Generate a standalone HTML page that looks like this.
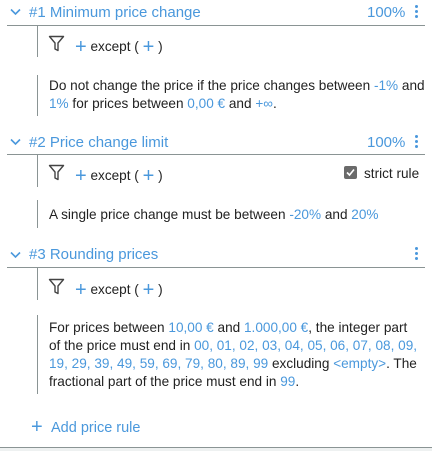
<!DOCTYPE html>
<html><head><style>
*{margin:0;padding:0;box-sizing:border-box}
body{width:432px;height:451px;background:#fff;font-family:"Liberation Sans",sans-serif;color:#222;position:relative;overflow:hidden}
.a{position:absolute;white-space:nowrap}
.b{color:#4a98dc}
.h{font-size:15px;color:#4a98dc}
.hl{position:absolute;left:7px;width:418px;height:1px;background:#8a9494}
.vl{position:absolute;left:37px;width:1px;background:#8a9494}
.t{font-size:13.6px;line-height:18px}
.dots{position:absolute;width:3px}
.dots i{display:block;width:3px;height:3px;border-radius:50%;background:#4a98dc;margin-bottom:2px}
</style></head><body>

<!-- rule 1 -->
<svg class="a" style="left:10px;top:8px" width="11" height="8"><path d="M1 1.5L5.5 6L10 1.5" fill="none" stroke="#4a98dc" stroke-width="1.6"/></svg>
<div class="a h" style="left:29px;top:4px">#1 Minimum price change</div>
<div class="a h" style="left:367px;top:4px">100%</div>
<div class="dots" style="left:415px;top:5px"><i></i><i></i><i></i></div>
<div class="hl" style="top:25px"></div>
<div class="vl" style="top:26px;height:31px"></div>
<svg class="a" style="left:48px;top:35px" width="17" height="17"><path d="M1.5 1.5H15.5L10 8V15.5L7 14V8Z" fill="none" stroke="#444" stroke-width="1.4" stroke-linejoin="round"/></svg>
<div class="a t" style="left:75px;top:36px"><span class="b" style="font-size:20px;position:relative;top:2px">+</span> except ( <span class="b" style="font-size:20px;position:relative;top:2px">+</span> )</div>
<div class="vl" style="top:75px;height:41px"></div>
<div class="a t" style="left:49px;top:77px">Do not change the price if the price changes between <span class="b">-1%</span> and<br><span class="b">1%</span> for prices between <span class="b">0,00 €</span> and <span class="b">+∞</span>.</div>

<!-- rule 2 -->
<svg class="a" style="left:10px;top:138px" width="11" height="8"><path d="M1 1.5L5.5 6L10 1.5" fill="none" stroke="#4a98dc" stroke-width="1.6"/></svg>
<div class="a h" style="left:29px;top:134px">#2 Price change limit</div>
<div class="a h" style="left:367px;top:134px">100%</div>
<div class="dots" style="left:415px;top:135px"><i></i><i></i><i></i></div>
<div class="hl" style="top:154px"></div>
<div class="vl" style="top:155px;height:32px"></div>
<svg class="a" style="left:48px;top:164px" width="17" height="17"><path d="M1.5 1.5H15.5L10 8V15.5L7 14V8Z" fill="none" stroke="#444" stroke-width="1.4" stroke-linejoin="round"/></svg>
<div class="a t" style="left:75px;top:165px"><span class="b" style="font-size:20px;position:relative;top:2px">+</span> except ( <span class="b" style="font-size:20px;position:relative;top:2px">+</span> )</div>
<div class="a" style="left:344px;top:166px;width:13px;height:13px;background:#6a6a6a;border-radius:2px"></div>
<svg class="a" style="left:344px;top:166px" width="13" height="13"><path d="M3 6.5L5.5 9L10 3.5" fill="none" stroke="#fff" stroke-width="1.6"/></svg>
<div class="a t" style="left:364px;top:165px">strict rule</div>
<div class="vl" style="top:200px;height:28px"></div>
<div class="a t" style="left:49px;top:206px">A single price change must be between <span class="b">-20%</span> and <span class="b">20%</span></div>

<!-- rule 3 -->
<svg class="a" style="left:10px;top:251px" width="11" height="8"><path d="M1 1.5L5.5 6L10 1.5" fill="none" stroke="#4a98dc" stroke-width="1.6"/></svg>
<div class="a h" style="left:29px;top:246px">#3 Rounding prices</div>
<div class="dots" style="left:415px;top:247px"><i></i><i></i><i></i></div>
<div class="hl" style="top:267px"></div>
<div class="vl" style="top:268px;height:32px"></div>
<svg class="a" style="left:48px;top:278px" width="17" height="17"><path d="M1.5 1.5H15.5L10 8V15.5L7 14V8Z" fill="none" stroke="#444" stroke-width="1.4" stroke-linejoin="round"/></svg>
<div class="a t" style="left:75px;top:279px"><span class="b" style="font-size:20px;position:relative;top:2px">+</span> except ( <span class="b" style="font-size:20px;position:relative;top:2px">+</span> )</div>
<div class="vl" style="top:315px;height:79px"></div>
<div class="a t" style="left:49px;top:319px">For prices between <span class="b">10,00 €</span> and <span class="b">1.000,00 €</span>, the integer part<br>of the price must end in <span class="b">00, 01, 02, 03, 04, 05, 06, 07, 08, 09,</span><br><span class="b">19, 29, 39, 49, 59, 69, 79, 80, 89, 99</span> excluding <span class="b">&lt;empty&gt;</span>. The<br>fractional part of the price must end in <span class="b">99</span>.</div>

<div class="a b" style="left:31px;top:416px;font-size:20px">+</div>
<div class="a h" style="left:51px;top:420px;font-size:14.5px">Add price rule</div>

<div class="a" style="left:0;top:447px;width:432px;height:1px;background:#8a9494"></div>
<div class="a" style="left:0;top:448px;width:432px;height:3px;background:#eef1f1"></div>
</body></html>
